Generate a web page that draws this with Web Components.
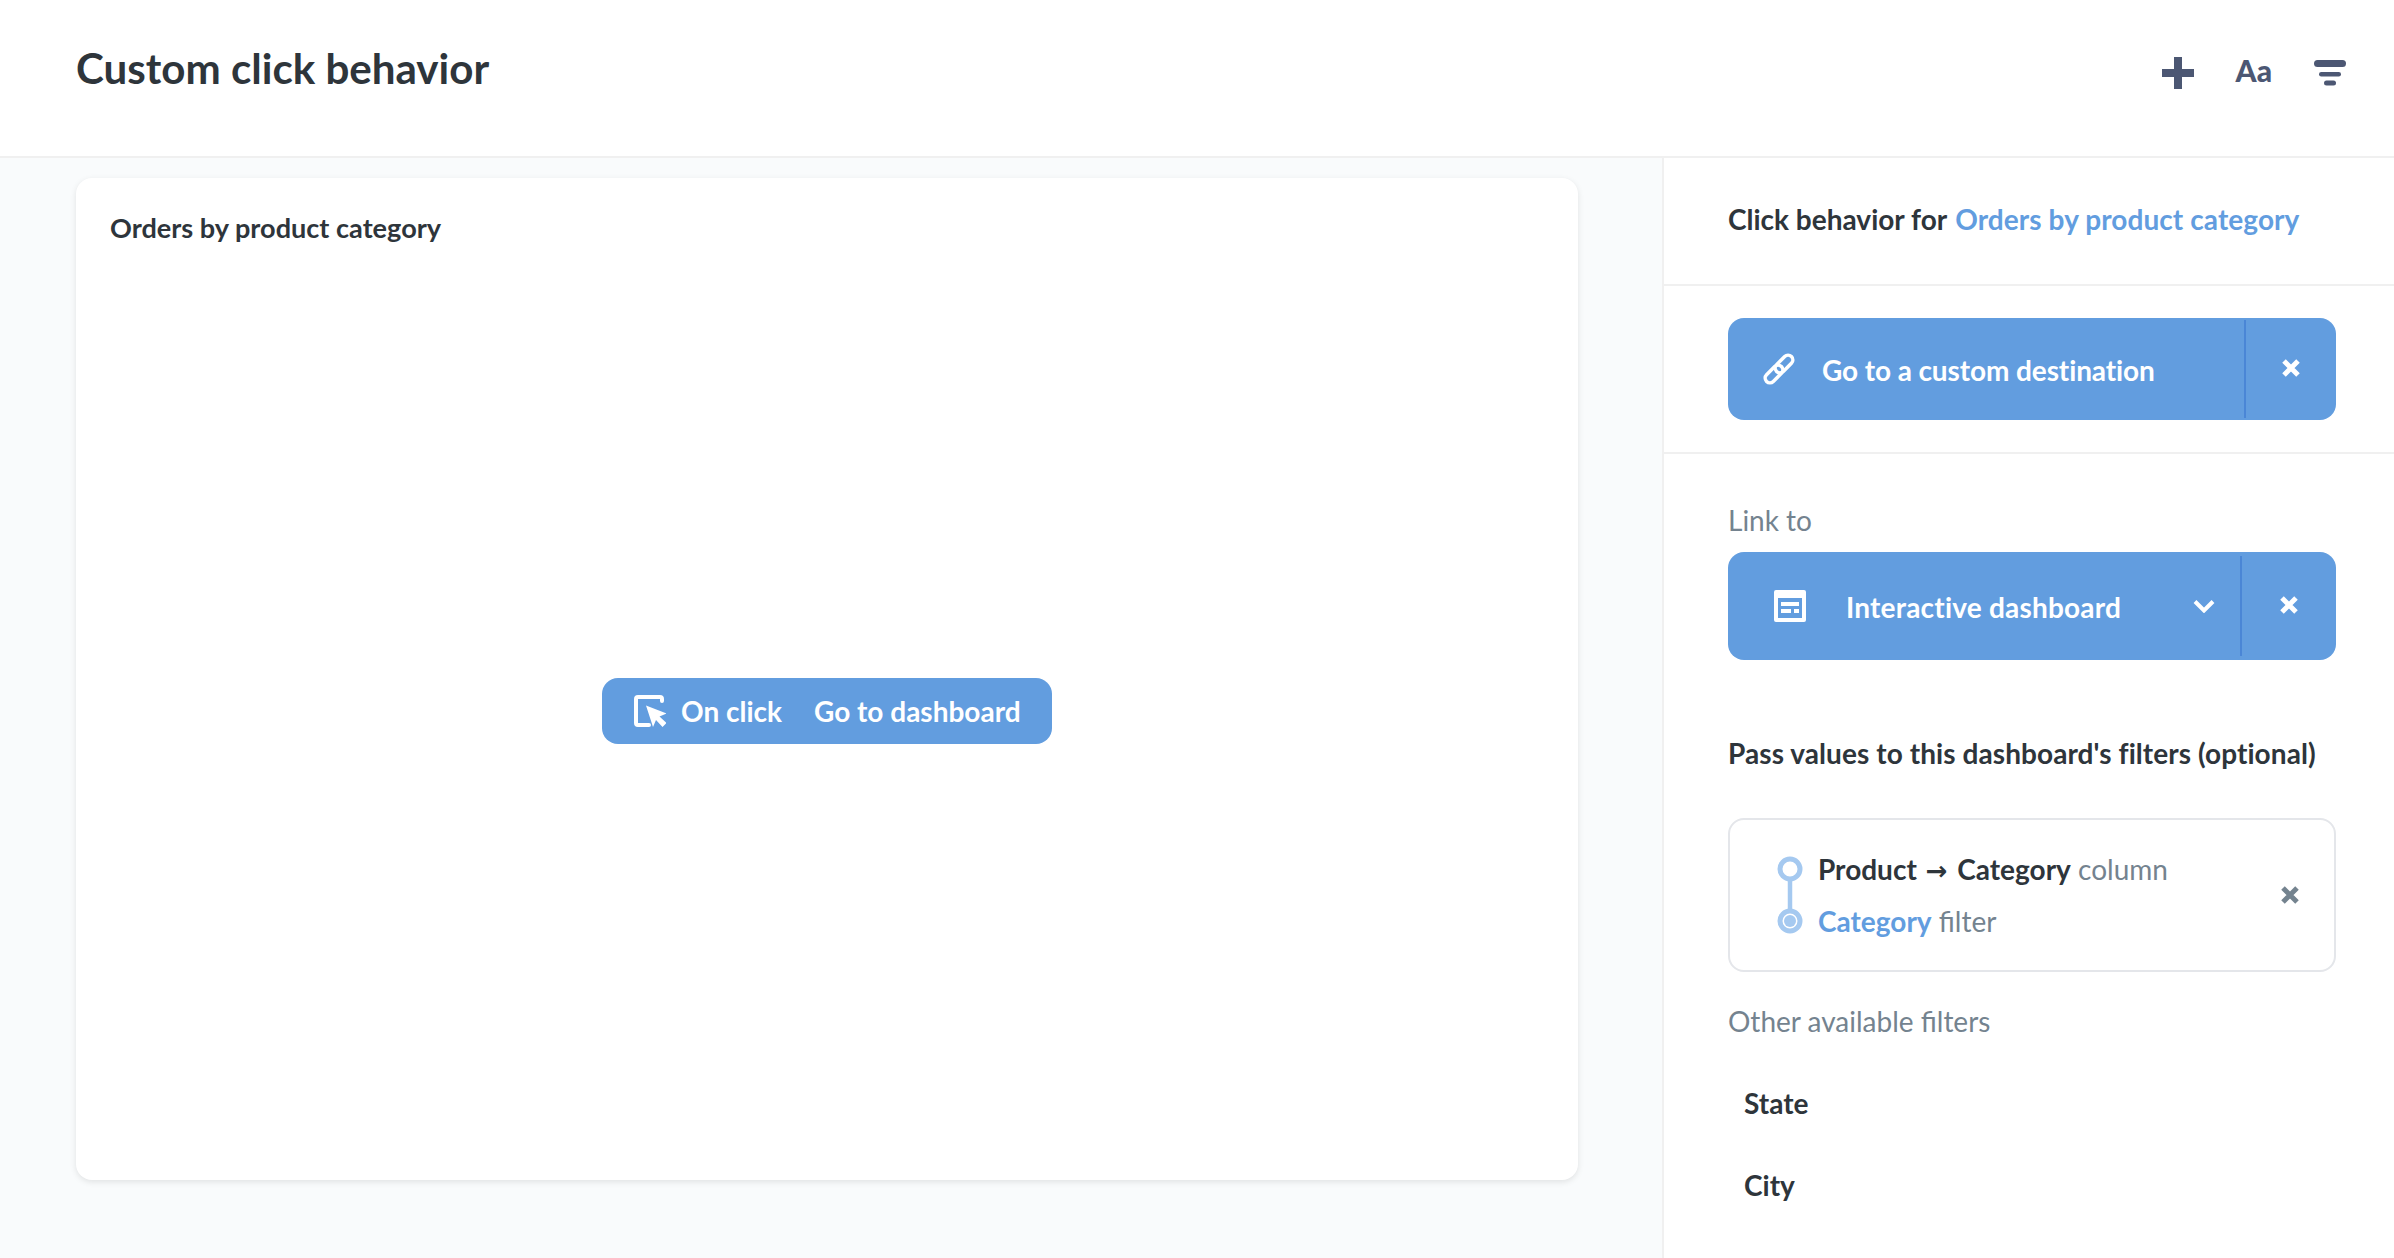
<!DOCTYPE html>
<html>
<head>
<meta charset="utf-8">
<title>Custom click behavior</title>
<style>
    html, body { margin: 0; height: 100%; overflow: hidden; }
    body { font-family: Lato, "Liberation Sans", sans-serif; color: #2e353b; background: #fff; }
</style>
</head>
<body>
<dash-app></dash-app>
<script>
const ICONS = {
    cursor: `<svg width="32" height="32" viewBox="0 0 32 32"><path d="M28 6V4a2 2 0 0 0-2-2H4A2 2 0 0 0 2 4v24A2 2 0 0 0 4 30h11" fill="none" stroke="#fff" stroke-width="4" stroke-linecap="round"/><path d="M12 10.500 32.500 18.500l-7 3 7 6.500-4 4-6.500-7L19 32z" fill="#fff"/></svg>`,
    link: `<svg width="32" height="32" viewBox="0 0 32 32" fill="none" stroke="#fff" stroke-width="3.500"><rect x="10.500" y="6.250" width="21" height="9.500" rx="4.750" transform="rotate(-45 21 11)"/><rect x="0.500" y="16.250" width="21" height="9.500" rx="4.750" transform="rotate(-45 11 21)"/></svg>`,
    dashboard: `<svg width="32" height="32" viewBox="0 0 32 32"><path fill-rule="evenodd" fill="#fff" d="M2 0h28a2 2 0 0 1 2 2v28a2 2 0 0 1-2 2H2a2 2 0 0 1-2-2V2a2 2 0 0 1 2-2zM4 8v20h24V8zM7 12h18v4H7zM7 19h10v4H7zM20 19h5v4h-5z"/></svg>`,
    chevron: `<svg width="22" height="14" viewBox="0 0 22 14"><path d="M2 2.500 11 11.500 20 2.500" fill="none" stroke="#fff" stroke-width="4"/></svg>`,
    close: `<svg width="18" height="18" viewBox="0 0 18 18"><path d="M2 2 16 16M16 2 2 16" fill="none" stroke="currentColor" stroke-width="5"/></svg>`,
    plus: `<svg width="32" height="32" viewBox="0 0 32 32"><path d="M12 0h8v12h12v8H20v12h-8V20H0v-8h12z" fill="#4c5773"/></svg>`,
    filter: `<svg width="32" height="26" viewBox="0 0 32 26" fill="#4c5773"><rect width="32" height="7" rx="3.500"/><rect x="5" y="12" width="22" height="4.500" rx="2.250"/><rect x="10" y="20.500" width="12" height="5" rx="2.500"/></svg>`
};

class DashApp extends HTMLElement {
    connectedCallback() {
        this.attachShadow({mode: 'open'});
        this.shadowRoot.innerHTML = `
            <style>
                :host { display: flex; flex-direction: column; height: 1258px; }
                .body { flex: 1; display: flex; min-height: 0; }
                .main { flex: 1; background: #f9fbfc; padding: 20px 84px 0 76px; }
            </style>
            <dash-header></dash-header>
            <div class="body">
                <div class="main">
                    <dash-card title="Orders by product category">
                        <click-badge></click-badge>
                    </dash-card>
                </div>
                <click-sidebar></click-sidebar>
            </div>
        `;
    }
}

class DashHeader extends HTMLElement {
    connectedCallback() {
        this.attachShadow({mode: 'open'});
        this.shadowRoot.innerHTML = `
            <style>
                :host { display: flex; align-items: center; box-sizing: border-box; height: 158px; padding: 0 48px 14px 76px; border-bottom: 2px solid #f0f0f0; }
                h1 { flex: 1; margin: 0 0 8px; font-size: 42.100px; font-weight: 700; color: #2e353b; }
                .tools { display: flex; align-items: center; padding-top: 4px; }
                svg { display: block; }
                .aa { margin: 0 42px 6px; font-size: 30px; font-weight: 900; color: #4c5773; line-height: 32px; }
            </style>
            <h1>Custom click behavior</h1>
            <div class="tools">
                ${ICONS.plus}
                <span class="aa">Aa</span>
                ${ICONS.filter}
            </div>
        `;
    }
}

class DashCard extends HTMLElement {
    connectedCallback() {
        this.attachShadow({mode: 'open'});
        this.shadowRoot.innerHTML = `
            <style>
                :host { display: flex; flex-direction: column; height: 1002px; background: #fff; border-radius: 16px; box-shadow: 0 2px 6px rgba(0,0,0,.1); }
                .title { height: 64px; padding: 33px 0 0 34px; margin-bottom: -33px; font-size: 27.100px; font-weight: 700; line-height: 34px; }
                .content { flex: 1; display: flex; align-items: center; justify-content: center; }
            </style>
            <div class="title">${this.getAttribute('title')}</div>
            <div class="content"><slot></slot></div>
        `;
    }
}

class ClickBadge extends HTMLElement {
    connectedCallback() {
        this.attachShadow({mode: 'open'});
        this.shadowRoot.innerHTML = `
            <style>
                :host { display: flex; align-items: center; box-sizing: border-box; width: 450px; height: 66px; padding: 0 32px; background: #629ddf; border-radius: 16px; color: #fff; font-size: 28px; font-weight: 700; white-space: nowrap; }
                svg { display: block; flex: none; margin-right: 15px; }
                .on { margin-right: 32px; }
            </style>
            ${ICONS.cursor}
            <span class="on">On click</span>
            <span>Go to dashboard</span>
        `;
    }
}

class ActionButton extends HTMLElement {
    connectedCallback() {
        this.attachShadow({mode: 'open'});
        let chevron = this.hasAttribute('chevron') ? `<span class="chev">${ICONS.chevron}</span>` : '';
        this.shadowRoot.innerHTML = `
            <style>
                :host { display: flex; align-items: stretch; box-sizing: border-box; background: #629ddf; border-radius: 16px; color: #fff; font-size: 28px; font-weight: 700; height: var(--h, 102px); padding: var(--inset, 2px) 0; }
                .main { flex: 1; display: flex; align-items: center; padding-left: var(--icon-left, 35px); }
                .label { flex: 1; margin-left: var(--label-gap, 27px); padding-top: 2px; letter-spacing: var(--track, -.1px); }
                .chev { display: flex; margin-right: 25px; }
                svg { display: block; }
                .close { flex: none; box-sizing: border-box; width: var(--close-w, 92px); display: flex; align-items: center; justify-content: center; padding-right: 1px; padding-bottom: 2px; border-left: 2px solid #4a86d6; }
            </style>
            <div class="main">
                <slot name="icon"></slot>
                <span class="label"><slot></slot></span>
                ${chevron}
            </div>
            <div class="close">${ICONS.close}</div>
        `;
    }
}

class FilterMapping extends HTMLElement {
    connectedCallback() {
        this.attachShadow({mode: 'open'});
        this.shadowRoot.innerHTML = `
            <style>
                :host { display: flex; align-items: center; box-sizing: border-box; height: 154px; padding: 0 35px 0 47px; border: 2px solid #e4e6ea; border-radius: 16px; font-size: 28px; color: #74838f; }
                svg { display: block; flex: none; }
                .lines { flex: 1; display: grid; row-gap: 18px; margin-left: 15px; line-height: 34px; }
                b { font-weight: 700; color: #2e353b; }
                b.blue { color: #629ddf; }
                .arrow { font-family: "DejaVu Sans", sans-serif; font-size: 26px; line-height: 0; margin: 0 3px 0 2px; }
                .x { display: flex; color: #74838f; }
            </style>
            <svg width="26" height="78" viewBox="0 0 26 78" fill="none" stroke="#a5c9f0" stroke-width="5">
                <circle cx="13" cy="13" r="10"/>
                <path d="M13 22v34" stroke-width="4.500"/>
                <circle cx="13" cy="65" r="10"/>
                <circle cx="13" cy="65" r="6" fill="#a5c9f0" stroke="none"/>
            </svg>
            <div class="lines">
                <div><b>Product <span class="arrow">→</span> Category</b> column</div>
                <div><b class="blue">Category</b> filter</div>
            </div>
            <span class="x">${ICONS.close}</span>
        `;
    }
}

class ClickSidebar extends HTMLElement {
    connectedCallback() {
        this.attachShadow({mode: 'open'});
        this.shadowRoot.innerHTML = `
            <style>
                :host { display: block; box-sizing: border-box; width: 732px; background: #fff; border-left: 2px solid #f0f0f0; font-size: 28px; color: #2e353b; }
                section { padding: 0 58px 0 64px; }
                .top { height: 128px; padding-bottom: 5px; box-sizing: border-box; display: flex; align-items: center; border-bottom: 2px solid #f0f0f0; font-weight: 700; white-space: nowrap; }
                .top span { color: #629ddf; margin-left: 8px; letter-spacing: .08px; }
                .kind { padding-top: 32px; padding-bottom: 32px; border-bottom: 2px solid #f0f0f0; }
                .kind svg, .link svg { display: block; }
                .link { padding-top: 49px; }
                .muted { color: #74838f; line-height: 34px; }
                .link action-button { margin-top: 15px; --h: 108px; --inset: 4px; --close-w: 96px; --icon-left: 46px; --label-gap: 40px; --track: .2px; }
                h3 { margin: 76px 0 0; font-size: 28px; font-weight: 700; line-height: 34px; letter-spacing: .08px; }
                filter-mapping { margin-top: 48px; }
                .others { margin-top: 32px; }
                .row { font-weight: 700; margin: 48px 0 0 16px; line-height: 34px; }
            </style>
            <section class="top">Click behavior for <span>Orders by product category</span></section>
            <section class="kind">
                <action-button>
                    <span slot="icon">${ICONS.link}</span>
                    Go to a custom destination
                </action-button>
            </section>
            <section class="link">
                <div class="muted">Link to</div>
                <action-button chevron>
                    <span slot="icon">${ICONS.dashboard}</span>
                    Interactive dashboard
                </action-button>
                <h3>Pass values to this dashboard's filters (optional)</h3>
                <filter-mapping></filter-mapping>
                <div class="muted others">Other available filters</div>
                <div class="row">State</div>
                <div class="row">City</div>
            </section>
        `;
    }
}

customElements.define('dash-header', DashHeader);
customElements.define('dash-card', DashCard);
customElements.define('click-badge', ClickBadge);
customElements.define('action-button', ActionButton);
customElements.define('filter-mapping', FilterMapping);
customElements.define('click-sidebar', ClickSidebar);
customElements.define('dash-app', DashApp);
</script>
</body>
</html>
